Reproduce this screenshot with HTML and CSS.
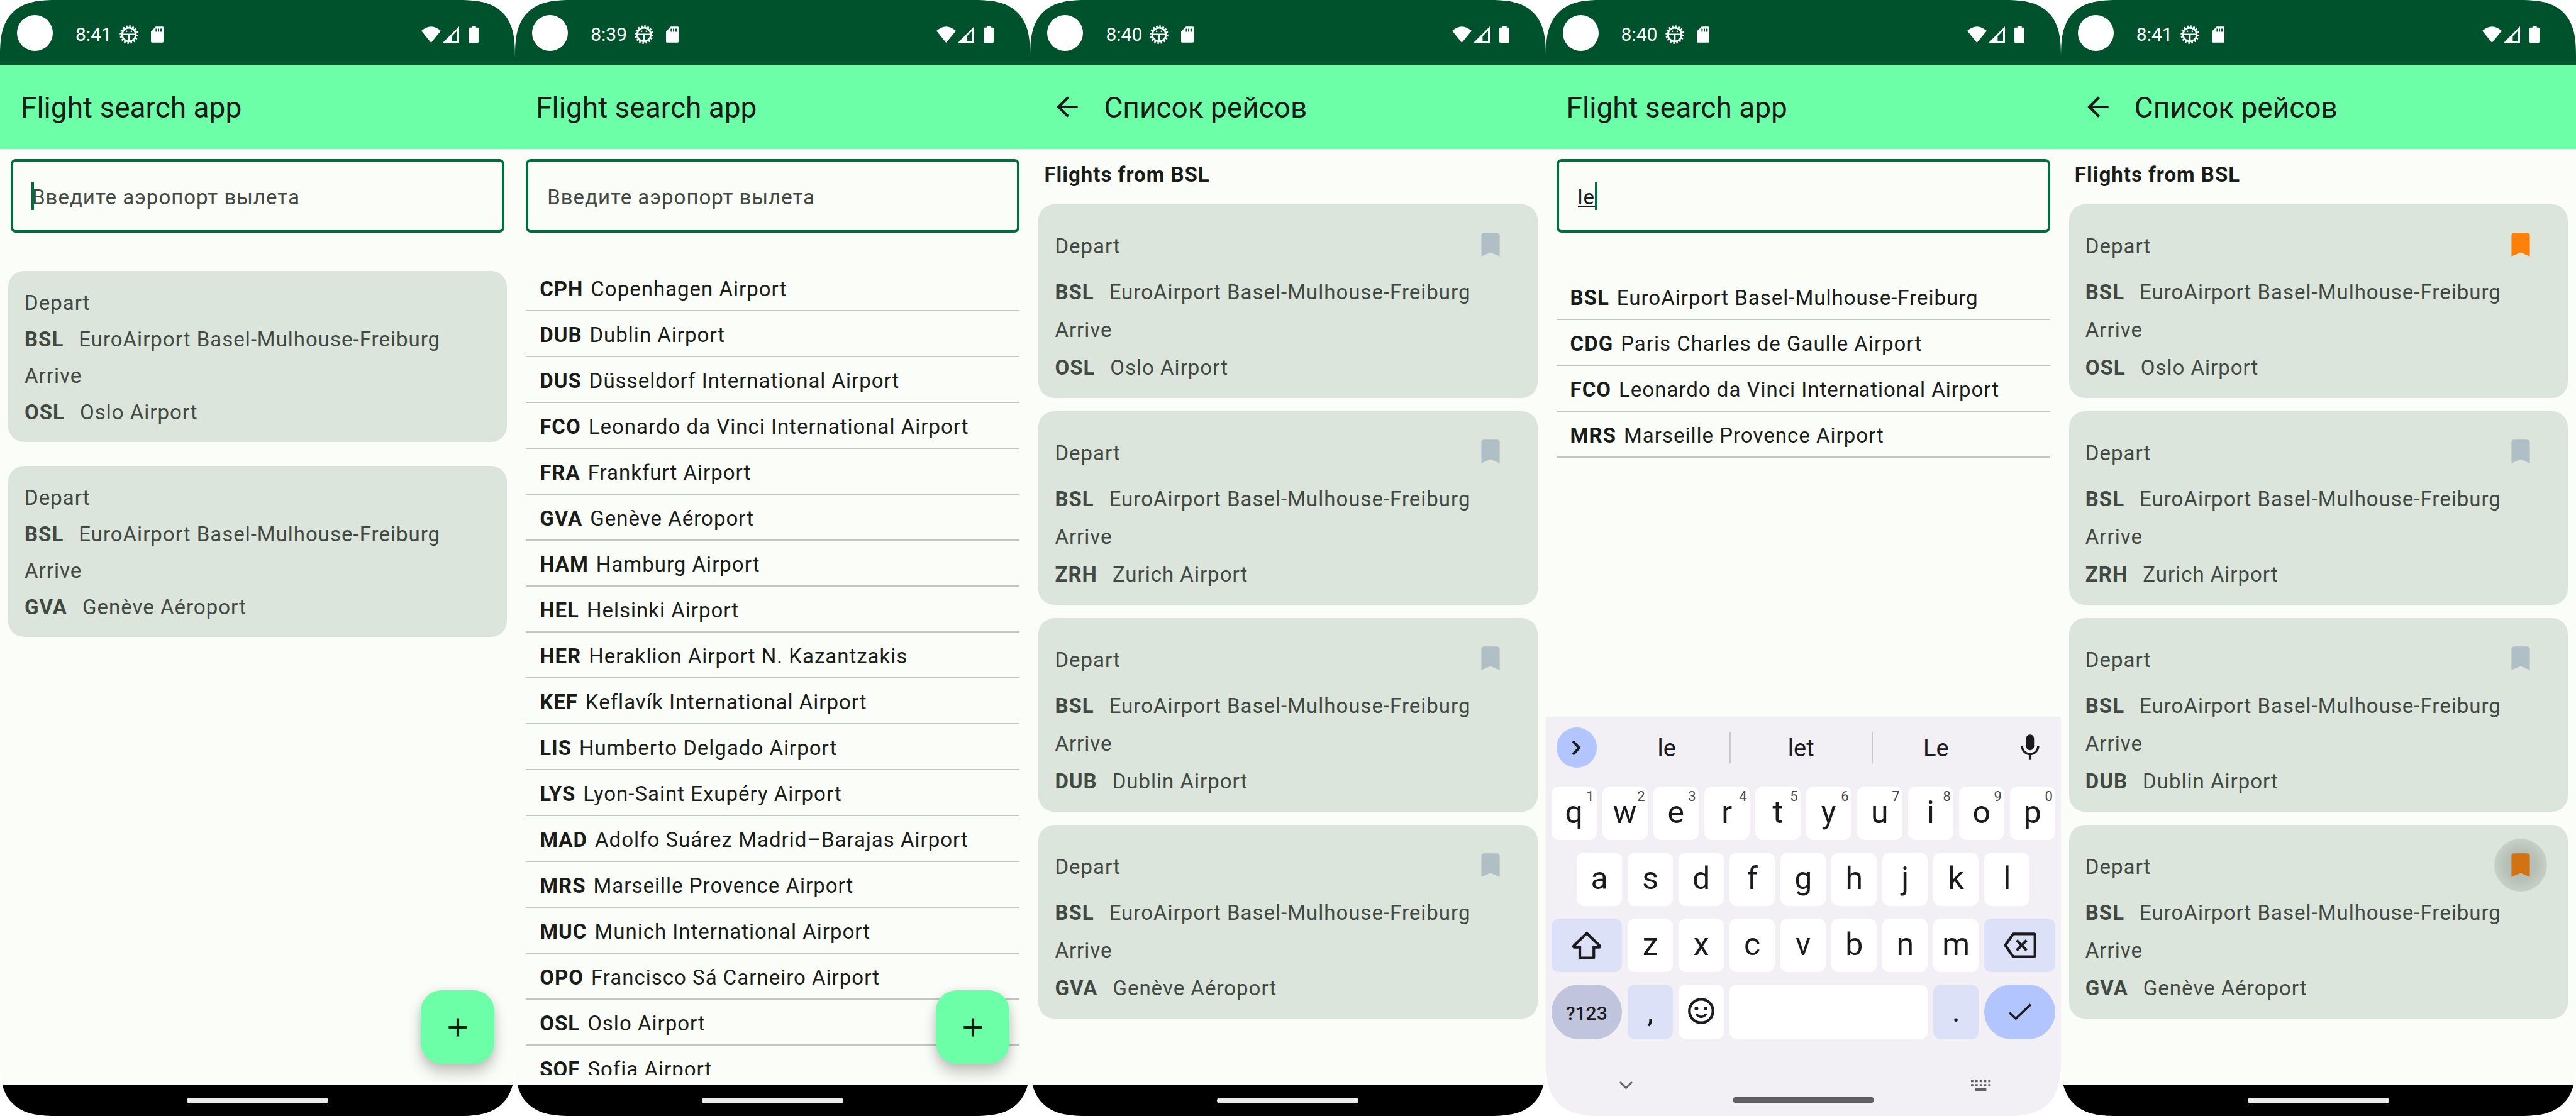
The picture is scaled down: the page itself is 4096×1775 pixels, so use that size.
FILE: index.html
```html
<!DOCTYPE html>
<html lang="ru">
<head>
<meta charset="utf-8">
<meta name="viewport" content="width=device-width, initial-scale=1">
<title>Flight search app</title>
<link rel="stylesheet" href="styles.css">
</head>
<body>
<svg class="sprite" aria-hidden="true">
  <symbol id="i-debug" viewBox="0 0 116 116">
    <g fill="none" stroke="currentColor">
      <circle cx="58" cy="58" r="50" stroke-width="14" pathLength="160" stroke-dasharray="5 5"/>
      <circle cx="58" cy="58" r="42" stroke-width="11"/>
      <path d="M18 57H98M58 57V98" stroke-width="10"/>
    </g>
    <circle cx="43" cy="38" r="5" fill="currentColor"/><circle cx="73" cy="38" r="5" fill="currentColor"/>
  </symbol>
  <symbol id="i-sd" viewBox="0 0 81 103"><path fill="currentColor" fill-rule="evenodd" d="M31 0H75Q81 0 81 6V97Q81 103 75 103H6Q0 103 0 97V31ZM30 13V33H38V13ZM45 13V33H53V13ZM60 13V33H70V13Z"/></symbol>
  <symbol id="i-wifi" viewBox="0 0 123 103"><path fill="currentColor" d="M0 28Q61-27 123 28L61 103Z"/></symbol>
  <symbol id="i-signal" viewBox="0 0 103 103"><path fill="currentColor" fill-rule="evenodd" d="M0 103L103 0V103ZM57 62V93H91V27Z"/></symbol>
  <symbol id="i-battery" viewBox="0 0 63 107"><path fill="currentColor" d="M19 0H46V11H57Q63 11 63 17V101Q63 107 57 107H6Q0 107 0 101V17Q0 11 6 11H19Z"/></symbol>
  <symbol id="i-back" viewBox="0 0 24 24"><path fill="currentColor" d="M20 11H7.83l5.59-5.59L12 4l-8 8 8 8 1.41-1.41L7.83 13H20v-2z"/></symbol>
  <symbol id="i-add" viewBox="0 0 24 24"><path fill="currentColor" d="M19 13h-6v6h-2v-6H5v-2h6V5h2v6h6v2z"/></symbol>
  <symbol id="i-bookmark" viewBox="0 0 24 24"><path fill="currentColor" d="M17 3H7c-1.1 0-2 .9-2 2v16l7-3 7 3V5c0-1.1-.9-2-2-2z"/></symbol>
  <symbol id="i-mic" viewBox="0 0 24 24"><path fill="currentColor" d="M12 14c1.66 0 3-1.34 3-3V5c0-1.66-1.34-3-3-3S9 3.34 9 5v6c0 1.66 1.34 3 3 3zm5.3-3c0 3-2.54 5.1-5.3 5.1S6.7 14 6.7 11H5c0 3.41 2.72 6.23 6 6.72V21h2v-3.28c3.28-.48 6-3.3 6-6.72h-1.7z"/></symbol>
  <symbol id="i-more" viewBox="0 0 15 25"><path fill="none" stroke="currentColor" stroke-width="4" d="M2 2L12 12.500L2 23"/></symbol>
  <symbol id="i-shift" viewBox="0 0 184 177"><path fill="none" stroke="currentColor" stroke-width="17" d="M92 12L173 90Q180 101 170 101H137V162Q137 169 130 169H55Q48 169 48 162V101H14Q4 101 11 90Z"/></symbol>
  <symbol id="i-delete" viewBox="0 0 207 162"><path fill="none" stroke="currentColor" stroke-width="17" stroke-linejoin="round" d="M60 9H189Q198 9 198 18V144Q198 153 189 153H60L10 81ZM82 49L145 113M145 49L82 113"/></symbol>
  <symbol id="i-emoji" viewBox="0 0 166 166"><g fill="none" stroke="currentColor"><circle cx="83" cy="83" r="74" stroke-width="17"/><path d="M54 105Q83 135 112 105" stroke-width="14" stroke-linecap="round"/></g><circle cx="53" cy="67" r="12" fill="currentColor"/><circle cx="111" cy="67" r="12" fill="currentColor"/></symbol>
  <symbol id="i-done" viewBox="0 0 144 105"><path fill="none" stroke="currentColor" stroke-width="14" d="M5 57L45 95L139 5"/></symbol>
  <symbol id="i-hide" viewBox="0 0 21 13"><path fill="none" stroke="currentColor" stroke-width="3" d="M1 1L10.500 10.500L20 1"/></symbol>
  <symbol id="i-keyboard" viewBox="0 0 42 24"><path fill="currentColor" d="M0 0h5v5h-5zM9 0h5v5h-5zM18 0h5v5h-5zM27 0h5v5h-5zM36 0h5v5h-5zM0 9h5v5h-5zM9 9h5v5h-5zM18 9h5v5h-5zM27 9h5v5h-5zM36 9h5v5h-5zM9 18h23v6h-23z"/></symbol>
</svg>

<main class="screens">

  <!-- Favourites -->
  <section class="phone">
    <div class="status"><span class="camera"></span><time class="clock">8:41</time><svg class="debug"><use href="#i-debug"/></svg><svg class="sd"><use href="#i-sd"/></svg><span class="signals"><svg class="wifi"><use href="#i-wifi"/></svg><svg class="signal"><use href="#i-signal"/></svg><svg class="battery"><use href="#i-battery"/></svg></span></div>
    <header class="appbar"><h1>Flight search app</h1></header>
    <div class="content">
      <div class="field"><input type="text" placeholder="Введите аэропорт вылета" aria-label="Введите аэропорт вылета"><span class="caret"></span></div>
      <div class="favourites">
        <article class="card">
          <p>Depart</p>
          <p><b>BSL</b>EuroAirport Basel-Mulhouse-Freiburg</p>
          <p>Arrive</p>
          <p><b>OSL</b>Oslo Airport</p>
        </article>
        <article class="card">
          <p>Depart</p>
          <p><b>BSL</b>EuroAirport Basel-Mulhouse-Freiburg</p>
          <p>Arrive</p>
          <p><b>GVA</b>Genève Aéroport</p>
        </article>
      </div>
      <button class="fab" type="button" aria-label="Add"><svg class="icon"><use href="#i-add"/></svg></button>
    </div>
    <footer class="nav"><span class="handle"></span></footer>
  </section>

  <!-- All airports -->
  <section class="phone">
    <div class="status"><span class="camera"></span><time class="clock">8:39</time><svg class="debug"><use href="#i-debug"/></svg><svg class="sd"><use href="#i-sd"/></svg><span class="signals"><svg class="wifi"><use href="#i-wifi"/></svg><svg class="signal"><use href="#i-signal"/></svg><svg class="battery"><use href="#i-battery"/></svg></span></div>
    <header class="appbar"><h1>Flight search app</h1></header>
    <div class="content">
      <div class="field"><input type="text" placeholder="Введите аэропорт вылета" aria-label="Введите аэропорт вылета"></div>
      <ul class="airports">
        <li><b>CPH</b>Copenhagen Airport</li>
        <li><b>DUB</b>Dublin Airport</li>
        <li><b>DUS</b>Düsseldorf International Airport</li>
        <li><b>FCO</b>Leonardo da Vinci International Airport</li>
        <li><b>FRA</b>Frankfurt Airport</li>
        <li><b>GVA</b>Genève Aéroport</li>
        <li><b>HAM</b>Hamburg Airport</li>
        <li><b>HEL</b>Helsinki Airport</li>
        <li><b>HER</b>Heraklion Airport N. Kazantzakis</li>
        <li><b>KEF</b>Keflavík International Airport</li>
        <li><b>LIS</b>Humberto Delgado Airport</li>
        <li><b>LYS</b>Lyon-Saint Exupéry Airport</li>
        <li><b>MAD</b>Adolfo Suárez Madrid–Barajas Airport</li>
        <li><b>MRS</b>Marseille Provence Airport</li>
        <li><b>MUC</b>Munich International Airport</li>
        <li><b>OPO</b>Francisco Sá Carneiro Airport</li>
        <li><b>OSL</b>Oslo Airport</li>
        <li><b>SOF</b>Sofia Airport</li>
      </ul>
      <button class="fab" type="button" aria-label="Add"><svg class="icon"><use href="#i-add"/></svg></button>
    </div>
    <footer class="nav"><span class="handle"></span></footer>
  </section>

  <!-- Flight list -->
  <section class="phone">
    <div class="status"><span class="camera"></span><time class="clock">8:40</time><svg class="debug"><use href="#i-debug"/></svg><svg class="sd"><use href="#i-sd"/></svg><span class="signals"><svg class="wifi"><use href="#i-wifi"/></svg><svg class="signal"><use href="#i-signal"/></svg><svg class="battery"><use href="#i-battery"/></svg></span></div>
    <header class="appbar with-back"><button class="back" type="button" aria-label="Back"><svg class="icon"><use href="#i-back"/></svg></button><h1>Список рейсов</h1></header>
    <div class="content">
      <h2>Flights from BSL</h2>
      <div class="flights">
        <article class="card flight">
          <div class="head"><p>Depart</p><button class="mark" type="button" aria-label="Bookmark"><svg class="icon"><use href="#i-bookmark"/></svg></button></div>
          <p><b>BSL</b>EuroAirport Basel-Mulhouse-Freiburg</p>
          <p>Arrive</p>
          <p><b>OSL</b>Oslo Airport</p>
        </article>
        <article class="card flight">
          <div class="head"><p>Depart</p><button class="mark" type="button" aria-label="Bookmark"><svg class="icon"><use href="#i-bookmark"/></svg></button></div>
          <p><b>BSL</b>EuroAirport Basel-Mulhouse-Freiburg</p>
          <p>Arrive</p>
          <p><b>ZRH</b>Zurich Airport</p>
        </article>
        <article class="card flight">
          <div class="head"><p>Depart</p><button class="mark" type="button" aria-label="Bookmark"><svg class="icon"><use href="#i-bookmark"/></svg></button></div>
          <p><b>BSL</b>EuroAirport Basel-Mulhouse-Freiburg</p>
          <p>Arrive</p>
          <p><b>DUB</b>Dublin Airport</p>
        </article>
        <article class="card flight">
          <div class="head"><p>Depart</p><button class="mark" type="button" aria-label="Bookmark"><svg class="icon"><use href="#i-bookmark"/></svg></button></div>
          <p><b>BSL</b>EuroAirport Basel-Mulhouse-Freiburg</p>
          <p>Arrive</p>
          <p><b>GVA</b>Genève Aéroport</p>
        </article>
      </div>
    </div>
    <footer class="nav"><span class="handle"></span></footer>
  </section>

  <!-- Search with keyboard -->
  <section class="phone">
    <div class="status"><span class="camera"></span><time class="clock">8:40</time><svg class="debug"><use href="#i-debug"/></svg><svg class="sd"><use href="#i-sd"/></svg><span class="signals"><svg class="wifi"><use href="#i-wifi"/></svg><svg class="signal"><use href="#i-signal"/></svg><svg class="battery"><use href="#i-battery"/></svg></span></div>
    <header class="appbar"><h1>Flight search app</h1></header>
    <div class="content">
      <div class="field"><input class="composing" type="text" value="le" aria-label="Введите аэропорт вылета"><span class="caret after-text"></span></div>
      <ul class="airports results">
        <li><b>BSL</b>EuroAirport Basel-Mulhouse-Freiburg</li>
        <li><b>CDG</b>Paris Charles de Gaulle Airport</li>
        <li><b>FCO</b>Leonardo da Vinci International Airport</li>
        <li><b>MRS</b>Marseille Provence Airport</li>
      </ul>
    </div>
    <div class="keyboard">
      <div class="strip">
        <button class="more" type="button" aria-label="More"><svg><use href="#i-more"/></svg></button>
        <button class="suggestion" type="button">le</button>
        <button class="suggestion" type="button">let</button>
        <button class="suggestion" type="button">Le</button>
        <button class="mic" type="button" aria-label="Voice input"><svg class="icon"><use href="#i-mic"/></svg></button>
      </div>
      <div class="keys">
        <button class="key" type="button">q<sup>1</sup></button>
        <button class="key" type="button">w<sup>2</sup></button>
        <button class="key" type="button">e<sup>3</sup></button>
        <button class="key" type="button">r<sup>4</sup></button>
        <button class="key" type="button">t<sup>5</sup></button>
        <button class="key" type="button">y<sup>6</sup></button>
        <button class="key" type="button">u<sup>7</sup></button>
        <button class="key" type="button">i<sup>8</sup></button>
        <button class="key" type="button">o<sup>9</sup></button>
        <button class="key" type="button">p<sup>0</sup></button>
        <button class="key indent" type="button">a</button>
        <button class="key" type="button">s</button>
        <button class="key" type="button">d</button>
        <button class="key" type="button">f</button>
        <button class="key" type="button">g</button>
        <button class="key" type="button">h</button>
        <button class="key" type="button">j</button>
        <button class="key" type="button">k</button>
        <button class="key" type="button">l</button>
        <button class="key wide soft" type="button" aria-label="Shift"><svg class="shift"><use href="#i-shift"/></svg></button>
        <button class="key" type="button">z</button>
        <button class="key" type="button">x</button>
        <button class="key" type="button">c</button>
        <button class="key" type="button">v</button>
        <button class="key" type="button">b</button>
        <button class="key" type="button">n</button>
        <button class="key" type="button">m</button>
        <button class="key wide soft" type="button" aria-label="Delete"><svg class="delete"><use href="#i-delete"/></svg></button>
        <button class="key wide symbols" type="button">?123</button>
        <button class="key soft" type="button">,</button>
        <button class="key" type="button" aria-label="Emoji"><svg class="emoji"><use href="#i-emoji"/></svg></button>
        <button class="key space" type="button" aria-label="Space"></button>
        <button class="key soft" type="button">.</button>
        <button class="key wide done" type="button" aria-label="Done"><svg class="check"><use href="#i-done"/></svg></button>
      </div>
      <div class="tools">
        <button class="tool" type="button" aria-label="Hide keyboard"><svg class="hide"><use href="#i-hide"/></svg></button>
        <button class="tool" type="button" aria-label="Switch keyboard"><svg class="switch"><use href="#i-keyboard"/></svg></button>
      </div>
      <span class="handle"></span>
    </div>
  </section>

  <!-- Flight list with bookmarks -->
  <section class="phone">
    <div class="status"><span class="camera"></span><time class="clock">8:41</time><svg class="debug"><use href="#i-debug"/></svg><svg class="sd"><use href="#i-sd"/></svg><span class="signals"><svg class="wifi"><use href="#i-wifi"/></svg><svg class="signal"><use href="#i-signal"/></svg><svg class="battery"><use href="#i-battery"/></svg></span></div>
    <header class="appbar with-back"><button class="back" type="button" aria-label="Back"><svg class="icon"><use href="#i-back"/></svg></button><h1>Список рейсов</h1></header>
    <div class="content">
      <h2>Flights from BSL</h2>
      <div class="flights">
        <article class="card flight">
          <div class="head"><p>Depart</p><button class="mark saved" type="button" aria-label="Bookmark"><svg class="icon"><use href="#i-bookmark"/></svg></button></div>
          <p><b>BSL</b>EuroAirport Basel-Mulhouse-Freiburg</p>
          <p>Arrive</p>
          <p><b>OSL</b>Oslo Airport</p>
        </article>
        <article class="card flight">
          <div class="head"><p>Depart</p><button class="mark" type="button" aria-label="Bookmark"><svg class="icon"><use href="#i-bookmark"/></svg></button></div>
          <p><b>BSL</b>EuroAirport Basel-Mulhouse-Freiburg</p>
          <p>Arrive</p>
          <p><b>ZRH</b>Zurich Airport</p>
        </article>
        <article class="card flight">
          <div class="head"><p>Depart</p><button class="mark" type="button" aria-label="Bookmark"><svg class="icon"><use href="#i-bookmark"/></svg></button></div>
          <p><b>BSL</b>EuroAirport Basel-Mulhouse-Freiburg</p>
          <p>Arrive</p>
          <p><b>DUB</b>Dublin Airport</p>
        </article>
        <article class="card flight">
          <div class="head"><p>Depart</p><button class="mark saved pressed" type="button" aria-label="Bookmark"><svg class="icon"><use href="#i-bookmark"/></svg></button></div>
          <p><b>BSL</b>EuroAirport Basel-Mulhouse-Freiburg</p>
          <p>Arrive</p>
          <p><b>GVA</b>Genève Aéroport</p>
        </article>
      </div>
    </div>
    <footer class="nav"><span class="handle"></span></footer>
  </section>

</main>
</body>
</html>
```
FILE: styles.css
```css
* { box-sizing: border-box; }

body {
  margin: 0;
  background: #fff;
  color: #191c19;
  font-family: Roboto, "Noto Sans", sans-serif;
  font-size: 33px;
  letter-spacing: 1px;
}

h1, h2, p, ul { margin: 0; padding: 0; }

button {
  display: flex;
  align-items: center;
  justify-content: center;
  padding: 0;
  border: 0;
  background: none;
  color: inherit;
  font: inherit;
}

svg { display: block; flex: none; }
.sprite { position: absolute; width: 0; height: 0; }
.icon { width: 50px; height: 50px; }

.screens {
  display: grid;
  grid-template-columns: repeat(5, minmax(0, 1fr));
  height: 100vh;
}

.phone {
  display: flex;
  flex-direction: column;
  min-height: 0;
  overflow: hidden;
  border-radius: 76px;
  background: #fbfdf8;
}

@supports (corner-shape: superellipse(1.5)) {
  .phone { border-radius: 92px; corner-shape: superellipse(1.5); }
}

/* System status bar */
.status {
  position: relative;
  display: flex;
  flex: none;
  align-items: center;
  height: 103px;
  padding: 6px 58px 0 120px;
  background: #00522d;
  color: #fff;
}

.camera {
  position: absolute;
  top: 24px;
  left: 27px;
  width: 57px;
  height: 57px;
  border-radius: 50%;
  background: #fff;
}

.clock { width: 70px; font-size: 30px; letter-spacing: 0; }
.debug { width: 30px; height: 30px; margin-right: 20px; }
.sd { width: 20px; height: 26px; }
.signals { display: flex; align-items: center; margin-left: auto; }
.wifi { width: 31px; height: 26px; margin-right: 3px; }
.signal { width: 26px; height: 26px; margin-right: 15px; }
.battery { width: 16px; height: 27px; }

/* Top app bar */
.appbar {
  display: flex;
  flex: none;
  align-items: center;
  height: 134px;
  padding-left: 33px;
  background: #6dffa8;
}

.appbar.with-back { padding-left: 9px; }
.appbar h1 { padding-top: 2px; font-size: 46px; font-weight: 400; letter-spacing: 0; }
.back { width: 100px; height: 100px; margin-right: 8px; }

.content {
  position: relative;
  display: flex;
  flex: 1;
  flex-direction: column;
  min-height: 0;
  padding: 16px 13px;
}

.field { position: relative; flex: none; margin: 0 4px; }

.field input {
  display: block;
  width: 100%;
  height: 117px;
  padding: 4px 29px 0 30px;
  border: 4px solid #006d3e;
  border-radius: 8px;
  outline: 0;
  background: transparent;
  color: #191c19;
  font: inherit;
  letter-spacing: inherit;
}

.field input::placeholder { color: #414942; opacity: 1; }
.field .composing { text-decoration: underline; text-decoration-thickness: 2px; text-underline-offset: 3px; }

.caret {
  position: absolute;
  top: 37px;
  left: 33px;
  width: 4px;
  height: 44px;
  background: #006d3e;
}

.caret.after-text { left: 61px; }

/* Cards */
.card {
  padding: 22px 25px 18px 26px;
  border-radius: 25px;
  background: #dce5dc;
  color: #414942;
}

.card p { line-height: 58px; }
.card b { margin-right: 24px; }

.favourites { display: grid; gap: 38px; margin-top: 61px; }
.flights { display: grid; gap: 21px; margin-top: 22px; }

h2 { padding-left: 9px; font-size: 33px; font-weight: 700; line-height: 50px; }

.flight p { line-height: 60px; }
.flight .head { display: flex; align-items: flex-start; justify-content: space-between; height: 88px; }
.flight .head p { line-height: 90px; }

.mark { width: 84px; height: 84px; margin-right: 8px; border-radius: 50%; color: #b0bec5; }
.mark.saved { color: #ff8008; }
.mark.pressed { background: radial-gradient(closest-side, #b0bab1 0%, #b7c0b7 55%, #c7d0c7 100%); color: #d17213; }

/* Airport list */
.airports { flex: 0 1 auto; min-height: 0; margin: 52px 4px 0; overflow: hidden; list-style: none; }
.airports.results { margin-top: 66px; }
.airports li { height: 73px; padding: 4px 22px 0; border-bottom: 2px solid #bfc9c0; line-height: 67px; white-space: nowrap; }
.airports b { margin-right: 12px; }

.fab {
  position: absolute;
  right: 33px;
  bottom: 33px;
  width: 117px;
  height: 117px;
  border-radius: 33px;
  background: #6dffa8;
  box-shadow: 0 14px 22px rgba(0, 0, 0, .22), 0 0 14px rgba(0, 0, 0, .08);
  color: #00210f;
}

/* Gesture navigation */
.nav { display: flex; flex: none; align-items: center; justify-content: center; height: 50px; background: #000; }
.handle { width: 225px; height: 9px; border-radius: 5px; background: #ebebeb; }

/* On-screen keyboard */
.keyboard {
  display: flex;
  flex: none;
  flex-direction: column;
  padding-bottom: 21px;
  background: #f2f0f5;
  box-shadow: 0 -1px 3px rgba(0, 0, 0, .08);
  color: #1b1b1f;
  letter-spacing: 0;
}

.strip { display: grid; grid-template-columns: 93px 8fr 9fr 8fr 98px; align-items: center; height: 94px; }
.more { width: 64px; height: 64px; margin-left: 17px; border-radius: 50%; background: #b2c5ff; }
.more svg { width: 15px; height: 25px; }
.suggestion { height: 50px; padding-top: 2px; border-right: 2px solid #cbc9cf; font-size: 38px; }
.suggestion:nth-child(4) { border-right: 0; }
.mic { height: 64px; }

.keys {
  display: grid;
  grid-template-columns: repeat(20, minmax(0, 1fr));
  grid-template-rows: 85px 85px 85px 87px;
  gap: 20px 9px;
  margin-top: 15px;
  padding: 0 9px;
}

.key { position: relative; grid-column: span 2; padding-bottom: 4px; border-radius: 12px; background: #fff; font-size: 50px; }
.key.indent { grid-column: 2 / span 2; }
.key.wide { grid-column: span 3; padding: 0; }
.key.space { grid-column: span 8; }
.key.soft { background: #dde1f8; }
.key.symbols { padding-top: 3px; border-radius: 44px; background: #c0c5dd; font-size: 30px; font-weight: 500; }
.key.done { border-radius: 44px; background: #b2c5ff; }
.key sup { position: absolute; top: 4px; right: 4px; color: #47464a; font-size: 22px; line-height: 24px; }

.shift { width: 46px; height: 45px; }
.delete { width: 52px; height: 41px; }
.emoji { width: 42px; height: 42px; }
.check { width: 36px; height: 27px; }

.tools { display: flex; align-items: center; justify-content: space-between; height: 20px; margin-top: 63px; padding: 0 111px 0 117px; color: #626064; }
.hide { width: 21px; height: 13px; }
.switch { width: 32px; height: 19px; }
.keyboard .handle { align-self: center; margin-top: 9px; background: #605f62; }
```
